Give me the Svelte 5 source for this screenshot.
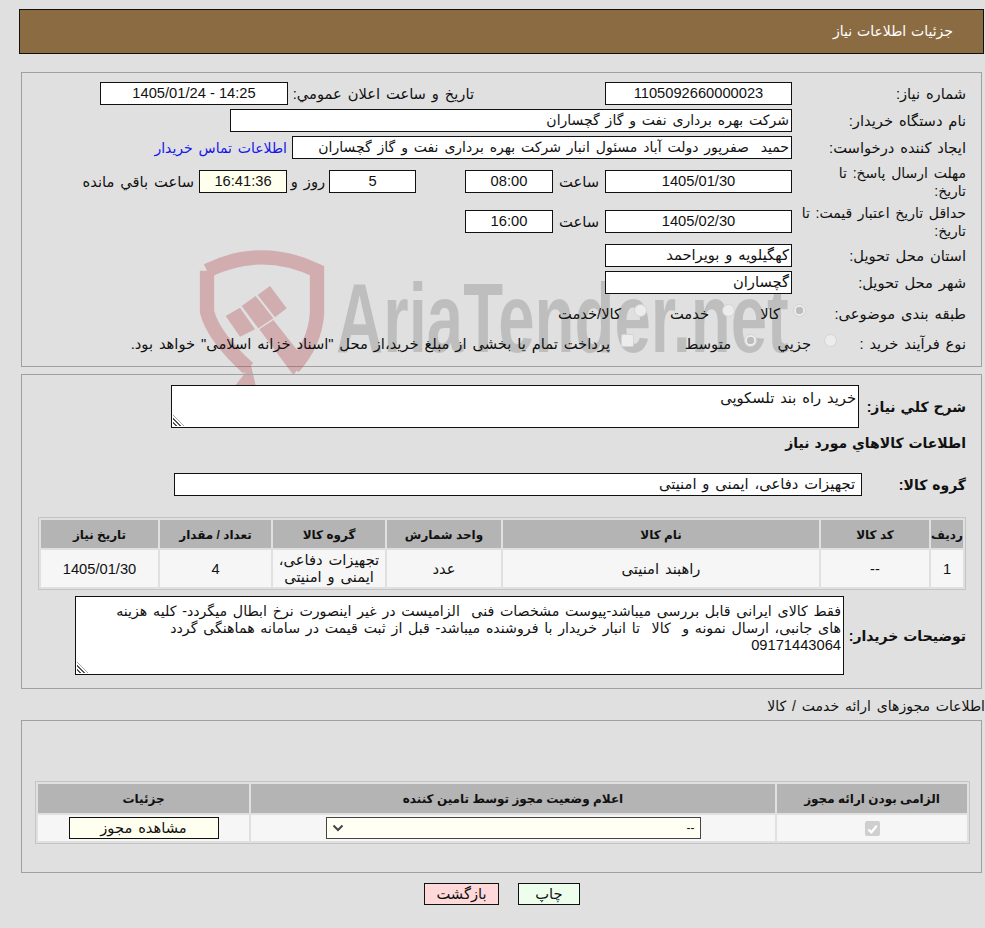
<script>
  const items = [
    { row: '1', code: '--', name: 'راهبند امنیتی', unit: 'عدد', group: 'تجهیزات دفاعی، ایمنی و امنیتی', qty: '4', date: '1405/01/30' }
  ]
</script>

<div class="page" dir="rtl">
  <div class="header">جزئیات اطلاعات نیاز</div>

  <div class="box first">
    <div class="watermark" aria-hidden="true">
      <svg class="shield" viewBox="0 0 960 450" width="320" height="150">
        <path class="band" d="M51 92 Q215 12 381 92 V220 Q375 310 310 382" />
        <path class="band" d="M51 92 V215 Q70 290 175 385" />
        <path d="M172 362 L180 362 L200 450 H125 L165 400 Z" />
        <path d="M107 228 L150 203 L195 268 L150 290 Z M155 198 L197 168 L250 235 L205 265 Z M203 165 L240 138 L290 205 L255 232 Z M208 268 L250 240 L345 360 L310 405 Z" />
      </svg>
      <span class="wm-text">AriaTender.net</span>
    </div>

    <div class="row">
      <div class="label">شماره نیاز:</div>
      <div class="field w187 center">1105092660000023</div>
      <div class="label-inline pub">تاریخ و ساعت اعلان عمومي:</div>
      <div class="field w188 center tight">14:25 - 1405/01/24</div>
    </div>
    <div class="row">
      <div class="label">نام دستگاه خریدار:</div>
      <div class="field w562 fa">شرکت بهره برداری نفت و گاز گچساران</div>
    </div>
    <div class="row">
      <div class="label">ایجاد کننده درخواست:</div>
      <div class="field w500 fa">حمید &nbsp;صفرپور دولت آباد مسئول انبار شرکت بهره برداری نفت و گاز گچساران</div>
      <span class="link fa">اطلاعات تماس خریدار</span>
    </div>
    <div class="row tall">
      <div class="label two">مهلت ارسال پاسخ: تا<br />تاریخ:</div>
      <div class="field w187 center">1405/01/30</div>
      <div class="label-inline saat">ساعت</div>
      <div class="field w88 center">08:00</div>
      <div class="spacer"></div>
      <div class="field w87 center">5</div>
      <div class="label-inline rooz">روز و</div>
      <div class="field w88 center timer">16:41:36</div>
      <div class="label-inline left">ساعت باقي مانده</div>
    </div>
    <div class="row tall second">
      <div class="label two">حداقل تاریخ اعتبار قیمت: تا<br />تاریخ:</div>
      <div class="field w187 center">1405/02/30</div>
      <div class="label-inline saat">ساعت</div>
      <div class="field w88 center">16:00</div>
    </div>
    <div class="row prov">
      <div class="label">استان محل تحویل:</div>
      <div class="field w187">کهگیلویه و بویراحمد</div>
    </div>
    <div class="row">
      <div class="label">شهر محل تحویل:</div>
      <div class="field w187">گچساران</div>
    </div>
    <div class="row radios cat">
      <div class="label">طبقه بندی موضوعی:</div>
      <span class="radio on"></span><span class="opt o1">کالا</span>
      <span class="radio"></span><span class="opt o2">خدمت</span>
      <span class="radio"></span><span class="opt">کالا/خدمت</span>
    </div>
    <div class="row radios proc">
      <div class="label">نوع فرآیند خرید :</div>
      <span class="radio"></span><span class="opt o3">جزیي</span>
      <span class="radio on"></span><span class="opt o4">متوسط</span>
      <span class="check"></span><span class="opt">پرداخت تمام یا بخشی از مبلغ خرید،از محل "اسناد خزانه اسلامی" خواهد بود.</span>
    </div>
  </div>

  <div class="box second-box">
    <div class="row top">
      <div class="blabel">شرح کلي نیاز:</div>
      <div class="area need">خرید راه بند تلسکوپی<span class="grip"></span></div>
    </div>
    <div class="goods-title">اطلاعات کالاهاي مورد نیاز</div>
    <div class="row group">
      <div class="blabel">گروه کالا:</div>
      <div class="field w688">تجهیزات دفاعی، ایمنی و امنیتی</div>
    </div>

    <table class="grid goods">
      <thead>
        <tr>
          <th class="c1">ردیف</th>
          <th class="c2">کد کالا</th>
          <th class="c3">نام کالا</th>
          <th class="c4">واحد شمارش</th>
          <th class="c5">گروه کالا</th>
          <th class="c6">تعداد / مقدار</th>
          <th>تاریخ نیاز</th>
        </tr>
      </thead>
      <tbody>
        {#each items as item}
          <tr>
            <td>{item.row}</td>
            <td>{item.code}</td>
            <td>{item.name}</td>
            <td>{item.unit}</td>
            <td>{item.group}</td>
            <td>{item.qty}</td>
            <td>{item.date}</td>
          </tr>
        {/each}
      </tbody>
    </table>

    <div class="row notes">
      <div class="blabel">توضیحات خریدار:</div>
      <div class="area buyer">فقط کالای ایرانی قابل بررسی میباشد-پیوست مشخصات فنی &nbsp;الزامیست در غیر اینصورت نرخ ابطال میگردد- کلیه هزینه های جانبی، ارسال نمونه و &nbsp;کالا &nbsp;تا انبار خریدار با فروشنده میباشد- قبل از ثبت قیمت در سامانه هماهنگی گردد <span class="phone">09171443064</span><span class="grip"></span></div>
    </div>
  </div>

  <div class="license-title">اطلاعات مجوزهای ارائه خدمت / کالا</div>

  <div class="box third-box">
    <table class="grid license">
      <thead>
        <tr>
          <th class="l1">الزامی بودن ارائه مجوز</th>
          <th class="l2">اعلام وضعیت مجوز توسط تامین کننده</th>
          <th>جزئیات</th>
        </tr>
      </thead>
      <tbody>
        <tr>
          <td><span class="tick"><svg viewBox="0 0 16 16" width="16" height="16"><path d="M3.5 8.5 L6.8 11.5 L12.5 4.5" fill="none" stroke="#fff" stroke-width="2.4" /></svg></span></td>
          <td>
            <div class="select">
              <span>--</span>
              <svg viewBox="0 0 12 8" width="12" height="8"><path d="M1.5 1.5 L6 6 L10.5 1.5" fill="none" stroke="#444" stroke-width="2" /></svg>
            </div>
          </td>
          <td><div class="view">مشاهده مجوز</div></td>
        </tr>
      </tbody>
    </table>
  </div>

  <div class="actions">
    <div class="btn print">چاپ</div>
    <div class="btn back">بازگشت</div>
  </div>
</div>

<style>
  :global(body) {
    margin: 0;
    background: #e0e0e0;
  }

  .page {
    width: 985px;
    height: 928px;
    overflow: hidden;
    box-sizing: border-box;
    padding-top: 9px;
    position: relative;
    color: #111;
    font-family: "Liberation Sans", "DejaVu Sans", sans-serif;
    font-size: 14.7px;
    word-spacing: 1.8px;
  }

  .header {
    height: 43px;
    margin: 0 1px 0 19px;
    padding-right: 30px;
    border: 1px solid #111;
    background: #8b6c42;
    color: #fff;
    font-size: 14px;
    word-spacing: 1px;
    line-height: 43px;
  }

  .box {
    position: relative;
    box-sizing: border-box;
    margin: 0 3px 0 21px;
    border: 1px solid #a0a0a0;
  }

  .first {
    margin-top: 18px;
    height: 295px;
    padding-top: 9px;
    padding-right: 15px;
  }

  .second-box {
    margin-top: 7px;
    height: 315px;
    padding-top: 10px;
    padding-right: 15px;
  }

  .third-box {
    margin-top: 4px;
    height: 153px;
    padding-top: 60px;
  }

  .watermark {
    position: absolute;
    top: 167px;
    left: 168px;
    width: 620px;
    height: 150px;
  }

  .shield {
    position: absolute;
    left: 0;
    top: 0;
    fill: #b03a40;
    opacity: 0.3;
  }

  .band {
    fill: none;
    stroke: #b03a40;
    stroke-width: 43;
  }

  .wm-text {
    position: absolute;
    left: 146px;
    top: 28px;
    direction: ltr;
    color: rgba(0, 0, 0, 0.15);
    font-family: "Liberation Sans", sans-serif;
    font-weight: bold;
    font-size: 98px;
    word-spacing: 0;
    line-height: 100px;
    white-space: nowrap;
    transform: scaleX(0.667);
    transform-origin: left top;
  }

  .row {
    position: relative;
    display: flex;
    align-items: center;
    height: 23px;
    margin-bottom: 4px;
  }

  .label {
    width: 174px;
    flex: none;
    line-height: 18px;
  }

  .two {
    font-size: 14px;
    white-space: nowrap;
  }

  .field {
    box-sizing: border-box;
    height: 23px;
    flex: none;
    padding: 0 2px;
    border: 1px solid #111;
    background: #fff;
    line-height: 21px;
    white-space: nowrap;
    overflow: hidden;
  }

  .fa {
    font-size: 14px;
    word-spacing: 2px;
  }

  .tight {
    word-spacing: 0;
  }

  .center {
    text-align: center;
  }

  .w187 { width: 187px; }
  .w188 { width: 188px; }
  .w562 { width: 562px; }
  .w500 { width: 500px; }
  .w88 { width: 88px; }
  .w87 { width: 87px; }
  .w688 { width: 688px; }

  .timer {
    background: #ffffee;
  }

  .label-inline {
    flex: none;
    white-space: nowrap;
  }

  .pub {
    box-sizing: border-box;
    width: 317px;
    padding-right: 131px;
  }

  .saat {
    width: 52px;
    text-align: center;
  }

  .spacer {
    width: 49px;
    flex: none;
  }

  .rooz {
    width: 42px;
    text-align: center;
  }

  .left {
    margin-right: 5px;
  }

  .link {
    margin-right: 5px;
    color: #1515ee;
    white-space: nowrap;
  }

  .tall {
    margin-top: 11px;
  }

  .second {
    margin-top: 17px;
  }

  .prov {
    margin-top: 11px;
  }

  .radios {
    white-space: nowrap;
  }

  .cat {
    margin-top: 8px;
  }

  .cat .label {
    width: 160px;
  }

  .proc {
    margin-top: 7px;
  }

  .proc .label {
    width: 129px;
  }

  .radio {
    width: 13px;
    height: 13px;
    flex: none;
    margin-bottom: 6px;
    margin-left: 13px;
    border-radius: 50%;
    background: #ececec;
    border: 1px solid #d4d4d4;
    box-sizing: border-box;
  }

  .radio.on {
    background: radial-gradient(circle, #bdbdbd 0 3.5px, #ececec 4px);
  }

  .check {
    width: 13px;
    height: 13px;
    flex: none;
    margin-bottom: 6px;
    margin-left: 11px;
    border-radius: 2px;
    background: #ececec;
    border: 1px solid #d4d4d4;
    box-sizing: border-box;
  }

  .opt {
    flex: none;
  }

  .o1 { width: 45px; }
  .o2 { width: 62px; }
  .o3 { width: 54px; }
  .o4 { width: 97px; }

  .top {
    height: 43px;
    margin-bottom: 0;
  }

  .blabel {
    width: 107px;
    flex: none;
    font-weight: bold;
    font-size: 14px;
    word-spacing: 1px;
    white-space: nowrap;
  }

  .area {
    position: relative;
    box-sizing: border-box;
    flex: none;
    border: 1px solid #111;
    background: #fff;
    padding: 4px 2px;
    line-height: 17px;
  }

  .need {
    width: 688px;
    height: 43px;
  }

  .buyer {
    width: 769px;
    height: 79px;
    padding-top: 6px;
    padding-left: 25px;
    font-size: 14.2px;
  }

  .phone {
    font-size: 14.7px;
  }

  .grip {
    position: absolute;
    left: 1px;
    bottom: 1px;
    width: 11px;
    height: 11px;
    background: repeating-linear-gradient(45deg, transparent 0 1.5px, #555 1.5px 3px);
    clip-path: polygon(0 0, 100% 100%, 0 100%);
  }

  .goods-title {
    margin-top: 5px;
    font-weight: bold;
    font-size: 14px;
    word-spacing: 1px;
    line-height: 20px;
  }

  .group {
    margin-top: 20px;
    margin-bottom: 0;
  }

  .group .blabel {
    width: 104px;
  }

  .group .field {
    padding-right: 6px;
  }

  .grid {
    border-collapse: separate;
    border-spacing: 2px;
    border: 1px solid #c4c4c4;
    background: #e0e0e0;
    table-layout: fixed;
  }

  .grid th {
    box-sizing: border-box;
    background: #b4b4b4;
    font-weight: bold;
    font-size: 12px;
    word-spacing: 0;
    height: 28px;
    padding: 1px 0 0;
  }

  .grid td {
    background: #f6f6f6;
    text-align: center;
    padding: 0;
    line-height: 17px;
  }

  .goods {
    width: 928px;
    margin-top: 21px;
  }

  .goods td {
    box-sizing: border-box;
    height: 37px;
    padding-top: 1px;
  }

  .c1 { width: 32px; }
  .c2 { width: 108px; }
  .c3 { width: 316px; }
  .c4 { width: 114px; }
  .c5 { width: 112px; }
  .c6 { width: 111px; }

  .notes {
    margin-top: 6px;
    height: 79px;
    margin-bottom: 0;
  }

  .notes .blabel {
    width: 122px;
  }

  .license-title {
    margin-top: 7px;
    font-size: 14px;
    word-spacing: 2px;
    line-height: 20px;
    white-space: nowrap;
  }

  .license {
    width: 935px;
    margin-right: 11px;
  }

  .license th {
    height: 29px;
  }

  .license td {
    height: 26px;
  }

  .l1 { width: 190px; }
  .l2 { width: 524px; }

  .tick {
    display: inline-flex;
    width: 15px;
    height: 15px;
    border-radius: 2px;
    background: #cfcfcf;
    align-items: center;
    justify-content: center;
    vertical-align: middle;
  }

  .select {
    box-sizing: border-box;
    width: 375px;
    height: 22px;
    margin: 0 auto;
    padding: 0 5px;
    border: 1px solid #444;
    background: #fffff4;
    display: flex;
    align-items: center;
    justify-content: space-between;
    font-size: 12px;
  }

  .view {
    box-sizing: border-box;
    width: 150px;
    height: 22px;
    margin: 0 auto;
    border: 1px solid #111;
    background: #fffff0;
    line-height: 20px;
  }

  .actions {
    display: flex;
    gap: 19px;
    margin-top: 10px;
    padding-right: 405px;
  }

  .btn {
    box-sizing: border-box;
    height: 22px;
    border: 1px solid #111;
    text-align: center;
    line-height: 20px;
  }

  .print {
    width: 62px;
    background: #edffec;
  }

  .back {
    width: 75px;
    background: #ffd9d9;
  }
</style>
